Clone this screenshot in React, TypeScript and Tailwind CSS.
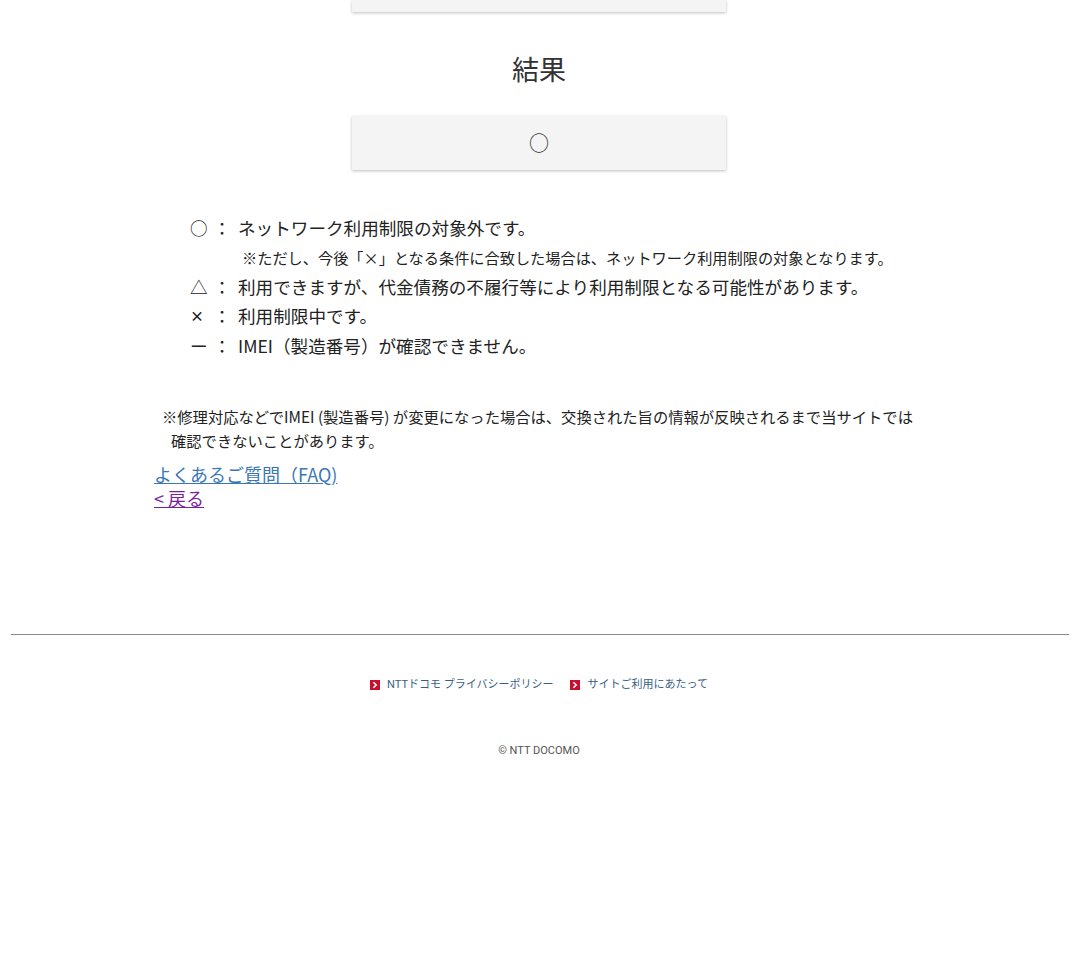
import React from 'react';

const legend = [
  { mark: '○', text: 'ネットワーク利用制限の対象外です。' },
  { mark: '△', text: '利用できますが、代金債務の不履行等により利用制限となる可能性があります。' },
  { mark: '×', text: '利用制限中です。' },
  { mark: 'ー', text: 'IMEI（製造番号）が確認できません。' },
];

const ArrowIcon = () => (
  <span className="mr-[7px] inline-flex h-[10px] w-[10px] translate-y-[3px] items-center justify-center bg-[#c8102e]">
    <svg viewBox="0 0 10 10" className="h-[8px] w-[8px]">
      <path d="M3 1.5 L6.5 5 L3 8.5" fill="none" stroke="#fff" strokeWidth="2" />
    </svg>
  </span>
);

const LegendRow: React.FC<{ mark: string; text: string }> = ({ mark, text }) => (
  <div className="flex">
    <span className={`w-[18px] ${mark === '×' ? 'text-[14px] font-bold' : ''}`}>{mark}</span>
    <span className="ml-[5px] w-[18px] text-center">：</span>
    <span className="ml-[7px]">{text}</span>
  </div>
);

const App: React.FC = () => {
  return (
    <div className="min-h-[974px] bg-white text-[#222] font-['Noto_Sans_CJK_JP',sans-serif]">
      <div className="mx-auto max-w-[770px]">
        {/* Previous input box (scrolled off) */}
        <div className="mx-auto h-[12px] w-[374px] bg-[#f4f4f4] shadow-[0_1px_3px_rgba(0,0,0,0.25)]" />

        <h2 className="mt-[38px] text-center text-[27px] leading-[38px] text-[#333]">結果</h2>

        <div className="mx-auto mt-[28px] flex h-[54px] w-[374px] items-center justify-center bg-[#f4f4f4] text-[20px] text-[#333] shadow-[0_1px_3px_rgba(0,0,0,0.25)]">
          ○
        </div>

        {/* Legend */}
        <div className="mt-[43px] pl-[36px] text-[17.6px] leading-[29.5px]">
          <LegendRow mark={legend[0].mark} text={legend[0].text} />
          <div className="pl-[52px] text-[15.2px] leading-[29px]">
            ※ただし、今後「×」となる条件に合致した場合は、ネットワーク利用制限の対象となります。
          </div>
          {legend.slice(1).map((item) => (
            <LegendRow key={item.mark} mark={item.mark} text={item.text} />
          ))}
        </div>

        {/* Note */}
        <div className="mt-[44px] pl-[8px] text-[15.3px] leading-[24px]">
          <p className="pl-[9px] -indent-[9px]">
            ※修理対応などでIMEI (製造番号) が変更になった場合は、交換された旨の情報が反映されるまで当サイトでは確認できないことがあります。
          </p>
        </div>

        <div className="mt-[10px] flex flex-col items-start text-[18px] leading-[24px]">
          <a href="#" className="text-[#3a77b7] underline">よくあるご質問（FAQ)</a>
          <a href="#" className="text-[#7a1fa2] underline">&lt; 戻る</a>
        </div>
      </div>

      {/* Footer */}
      <div className="ml-[11px] mr-[9px] mt-[124px] border-t border-[#8a8a8a]" />
      <div className="mt-[42px] flex justify-center gap-[17px] text-[11px] text-[#3a5f86] font-['Roboto','Noto_Sans_CJK_JP',sans-serif]">
        <a href="#" className="flex items-start">
          <ArrowIcon />
          NTTドコモ プライバシーポリシー
        </a>
        <a href="#" className="flex items-start">
          <ArrowIcon />
          サイトご利用にあたって
        </a>
      </div>
      <p className="mt-[49px] text-center text-[11px] text-[#555] font-['Roboto',sans-serif]">© NTT DOCOMO</p>
    </div>
  );
};

export default App;
